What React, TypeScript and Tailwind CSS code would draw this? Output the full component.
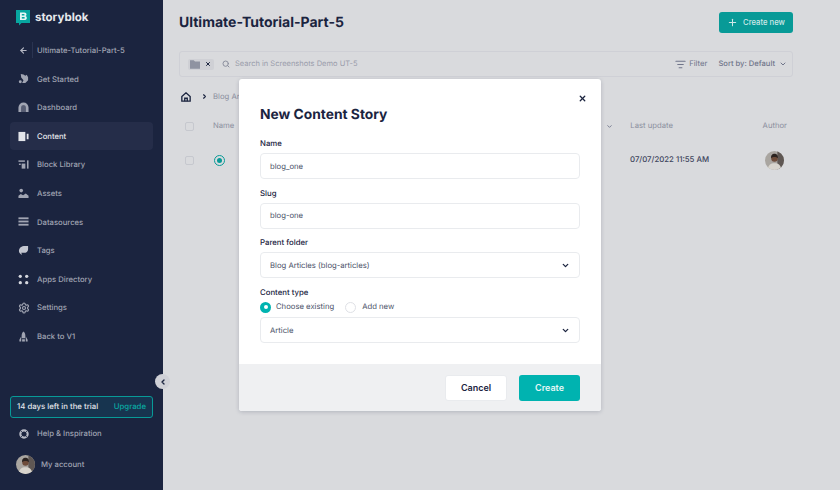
import type React from 'react';
import { ArrowLeft, ChevronDown, ChevronLeft, ChevronRight, ListFilter, Plus, Search, Settings, X } from 'lucide-react';

const Avatar: React.FC<{ className: string }> = ({ className }) => (
  <svg viewBox="0 0 20 20" className={`${className} rounded-full`}>
    <rect width="20" height="20" fill="#a9a5a0" />
    <rect x="13" width="7" height="20" fill="#5f5753" />
    <path d="M3 20c0-5 3-7 7-7s7 2 7 7z" fill="#d8d4cd" />
    <circle cx="10" cy="8" r="3.4" fill="#6e4c3a" />
    <path d="M6.4 7.5C6.2 4 8 3 10 3s3.8 1 3.6 4.5C12 5.8 8 5.8 6.4 7.5z" fill="#2b2320" />
  </svg>
);

const iconClass = 'h-[11px] w-[11px] fill-[#a1a5b3]';

const navItems: { label: string; icon: React.ReactNode; active?: boolean }[] = [
  {
    label: 'Get Started',
    icon: (
      <svg viewBox="0 0 12 12" className={iconClass}>
        <path d="M3 1l3 .5L8 3l1.5-1L11 4.5V8L8 11H4.5L6 8 3.5 5z" />
        <circle cx="2.5" cy="9.5" r="1.6" />
      </svg>
    ),
  },
  {
    label: 'Dashboard',
    icon: (
      <svg viewBox="0 0 12 12" className={iconClass}>
        <path d="M0.5 11V6a5.5 5.5 0 0 1 11 0v5H8.5V6a2.5 2.5 0 0 0-5 0v5z" />
        <path d="M3.5 11V6a2.5 2.5 0 0 1 5 0v5z" opacity="0.45" />
      </svg>
    ),
  },
  {
    label: 'Content',
    active: true,
    icon: (
      <svg viewBox="0 0 12 12" className="h-[11px] w-[11px] fill-[#e3e5ea]">
        <rect x="0.5" y="1" width="7.5" height="10" />
        <rect x="9.5" y="3" width="2" height="6" />
      </svg>
    ),
  },
  {
    label: 'Block Library',
    icon: (
      <svg viewBox="0 0 12 12" className={iconClass}>
        <rect x="0.5" y="1.5" width="7" height="1.6" />
        <rect x="4" y="5" width="4" height="5.5" />
        <rect x="1" y="5" width="2" height="1.5" />
        <rect x="9.8" y="1.5" width="1.7" height="9" />
      </svg>
    ),
  },
  {
    label: 'Assets',
    icon: (
      <svg viewBox="0 0 12 12" className={iconClass}>
        <circle cx="3.5" cy="2.8" r="2" />
        <path d="M0.5 11V8.5L3 6.5 5.5 8 8.5 6l3 2.5V11z" />
      </svg>
    ),
  },
  {
    label: 'Datasources',
    icon: (
      <svg viewBox="0 0 12 12" className={iconClass}>
        <rect x="0.5" y="1.5" width="11" height="2" />
        <rect x="0.5" y="5" width="11" height="2" />
        <rect x="0.5" y="8.5" width="11" height="2" />
      </svg>
    ),
  },
  {
    label: 'Tags',
    icon: (
      <svg viewBox="0 0 12 12" className="h-[11px] w-[11px] fill-[#c3c6d0]">
        <path d="M1 6.5C1 3 4 1 7.5 1H11v3.5C11 7 9 8.5 6.5 8.5H3.5L4.5 10.5C2.5 10 1 8.5 1 6.5z" />
      </svg>
    ),
  },
  {
    label: 'Apps Directory',
    icon: (
      <svg viewBox="0 0 12 12" className="h-[11px] w-[11px] fill-[#d5d7de]">
        <circle cx="2.5" cy="2.5" r="1.8" />
        <circle cx="9.5" cy="2.5" r="1.8" />
        <circle cx="2.5" cy="9.5" r="1.8" />
        <circle cx="9.5" cy="9.5" r="1.8" />
      </svg>
    ),
  },
  {
    label: 'Settings',
    icon: <Settings className="h-3 w-3 text-[#a1a5b3]" strokeWidth={2.4} />,
  },
  {
    label: 'Back to V1',
    icon: (
      <svg viewBox="0 0 12 12" className={iconClass}>
        <path d="M6 0.5c1.3 1 2 2.5 2 4.5v3H4V5c0-2 .7-3.5 2-4.5z" />
        <path d="M3.5 6L1.5 9.5v2h2zM8.5 6l2 3.5v2h-2z" />
        <rect x="4.5" y="9" width="3" height="2.5" />
      </svg>
    ),
  },
];

const Sidebar: React.FC = () => (
  <aside className="flex h-full w-[163px] shrink-0 flex-col bg-[#1b243f] px-[10px]">
    <div className="flex h-[36px] items-center gap-[5px] pl-[6px]">
      <svg viewBox="0 0 14 16" className="h-[16px] w-[14px]">
        <path d="M0 0h14v13H5.5L3 15.5V13H0z" fill="#08a6a0" />
        <path d="M4 2.5h4.2c1.5 0 2.3.8 2.3 2 0 .8-.4 1.3-1 1.6.8.2 1.3.9 1.3 1.8 0 1.4-1 2.1-2.5 2.1H4z" fill="#e5f6f5" />
        <rect x="5.8" y="4" width="2.6" height="1.5" fill="#08a6a0" />
        <rect x="5.8" y="7" width="2.8" height="1.6" fill="#08a6a0" />
      </svg>
      <span className="text-[11.5px] font-bold text-[#e6e8ec]">storyblok</span>
    </div>
    <div className="flex h-[28.6px] items-center">
      <ArrowLeft className="ml-[9px] h-[9px] w-[9px] text-[#b5b8c4]" strokeWidth={3} />
      <div className="ml-[4px] mr-[4px] h-[16px] w-px bg-[#2a3451]" />
      <span className="text-[7.7px] font-medium text-[#a1a5b3]">Ultimate-Tutorial-Part-5</span>
    </div>
    <nav className="flex flex-col">
      {navItems.map((item) => (
        <div
          key={item.label}
          className={`flex h-[28.6px] items-center rounded-[4px] pl-[8px] ${item.active ? 'bg-[#252d49]' : ''}`}
        >
          <span className="flex w-[19px] items-center">{item.icon}</span>
          <span className={`pt-[1px] text-[7.7px] font-medium ${item.active ? 'text-[#e8eaee]' : 'text-[#a1a5b3]'}`}>
            {item.label}
          </span>
        </div>
      ))}
    </nav>
    <div className="mt-auto mb-[11px]">
      <div className="flex h-[22px] items-center justify-between rounded-[3px] border border-[#089a97] bg-[#17344f] pl-[6px] pr-[6px]">
        <span className="text-[7.8px] font-medium text-[#e3e5ea]">14 days left in the trial</span>
        <span className="text-[7.8px] font-medium text-[#0aa8a2]">Upgrade</span>
      </div>
      <div className="flex h-[31px] items-center pl-[9px]">
        <span className="flex w-[18px] items-center">
          <svg viewBox="0 0 12 12" className="h-[10px] w-[10px]">
            <circle cx="6" cy="6" r="4.4" fill="none" stroke="#b5b8c4" strokeWidth="2.6" />
            <path d="M2.5 2.5l2 2M9.5 2.5l-2 2M2.5 9.5l2-2M9.5 9.5l-2-2" stroke="#1b243f" strokeWidth="1" />
          </svg>
        </span>
        <span className="text-[7.7px] font-medium text-[#a1a5b3]">Help &amp; Inspiration</span>
      </div>
      <div className="flex h-[30px] items-center pl-[6px]">
        <Avatar className="mr-[6px] h-[19px] w-[19px]" />
        <span className="pt-[1px] text-[7.7px] font-medium text-[#a1a5b3]">My account</span>
      </div>
    </div>
  </aside>
);

const InputBox: React.FC<{ value: string; select?: boolean; className?: string }> = ({ value, select, className }) => (
  <div className={`flex h-[26px] items-center justify-between rounded-[4px] border border-[#e9ebee] bg-white pl-[9px] pr-[9px] ${className ?? ''}`}>
    <span className="pt-[1px] text-[7.7px] text-[#4b5268]">{value}</span>
    {select && <ChevronDown className="h-[9px] w-[9px] text-[#1b243f]" strokeWidth={3.5} />}
  </div>
);

const Field: React.FC<{ label: string; value: string; select?: boolean }> = ({ label, value, select }) => (
  <div>
    <div className="text-[7.8px] font-medium leading-[12px] text-[#1b243f]">{label}</div>
    <InputBox value={value} select={select} className="mt-[4px]" />
  </div>
);

const Modal: React.FC = () => (
  <div className="absolute left-[239px] top-[79px] flex h-[332px] w-[362px] flex-col overflow-hidden rounded-[3px] bg-white shadow-[0_1px_4px_rgba(27,36,63,0.2)]">
    <X className="absolute right-[14px] top-[15px] h-[9px] w-[9px] text-[#1b243f]" strokeWidth={3.5} />
    <div className="flex-1 px-[21px] pt-[25px]">
      <h2 className="text-[13.8px] font-bold leading-[22px] text-[#1b243f]">New Content Story</h2>
      <div className="mt-[11px] flex flex-col gap-[7.5px]">
        <Field label="Name" value="blog_one" />
        <Field label="Slug" value="blog-one" />
        <Field label="Parent folder" value="Blog Articles (blog-articles)" select />
        <div>
          <div className="text-[7.8px] font-medium leading-[12px] text-[#1b243f]">Content type</div>
          <div className="mt-[3px] flex h-[13px] items-center">
            <span className="flex h-[11px] w-[11px] items-center justify-center rounded-full bg-[#00b3b0]">
              <span className="h-[4px] w-[4px] rounded-full bg-white" />
            </span>
            <span className="ml-[5px] text-[7.7px] text-[#4b5268]">Choose existing</span>
            <span className="ml-[11px] h-[11px] w-[11px] rounded-full border border-[#dfe1e6] bg-white" />
            <span className="ml-[6px] text-[7.7px] text-[#4b5268]">Add new</span>
          </div>
          <InputBox value="Article" select className="mt-[3.5px]" />
        </div>
      </div>
    </div>
    <div className="flex h-[47px] items-center justify-end gap-[12px] bg-[#eff0f2] px-[21px]">
      <button className="h-[26px] w-[62px] rounded-[3px] border border-[#e9ebee] bg-white text-[9px] font-semibold text-[#1b243f]">
        Cancel
      </button>
      <button className="h-[26px] w-[61px] rounded-[3px] bg-[#00b3b0] text-[9px] font-semibold text-[#e5f7f6]">
        Create
      </button>
    </div>
  </div>
);

const Main: React.FC = () => (
  <main className="flex h-full flex-1 flex-col bg-[#d9dadd] pl-[16px] pr-[47px]">
    <div className="flex h-[45px] items-center justify-between">
      <h1 className="text-[14px] font-bold text-[#1b243f]">Ultimate-Tutorial-Part-5</h1>
      <button className="flex h-[21px] w-[74px] items-center justify-center gap-[5px] rounded-[3px] bg-[#089a97] text-[7.7px] font-medium text-[#cfe8e8]">
        <Plus className="h-[11px] w-[11px]" strokeWidth={2.2} />
        Create new
      </button>
    </div>
    <div className="mt-[6px] flex h-[26px] items-center rounded-[3px] border border-[#cfd0d6] pl-[8px] pr-[5px]">
      <div className="flex h-[11px] w-[26px] items-center gap-[5px] rounded-[2px] bg-[#cfd0d5] px-[2px]">
        <svg viewBox="0 0 12 10" className="h-[9px] w-[10px] fill-[#8f93a1]">
          <path d="M0 0h4.5L6 1.5h6V10H0z" />
        </svg>
        <X className="h-[6px] w-[6px] text-[#1b243f]" strokeWidth={4} />
      </div>
      <Search className="ml-[8px] h-[8px] w-[8px] text-[#8b8f9e]" strokeWidth={3} />
      <span className="ml-[5px] text-[7.5px] text-[#9a9dab]">Search in Screenshots Demo UT-5</span>
      <ListFilter className="ml-auto h-[11px] w-[11px] text-[#70758a]" strokeWidth={2.5} />
      <span className="ml-[3px] text-[7.7px] text-[#70758a]">Filter</span>
      <span className="ml-[11px] text-[7.6px] font-medium text-[#70758a]">Sort by: Default</span>
      <ChevronDown className="ml-[4px] h-[8px] w-[8px] text-[#70758a]" strokeWidth={3} />
    </div>
    <div className="mt-[12px] flex h-[15px] items-center pl-[2px]">
      <svg viewBox="0 0 12 12" className="h-[10px] w-[10px] fill-none stroke-[#1b243f] stroke-[1.6]">
        <path d="M1 5.5L6 1l5 4.5V11H1z" />
        <path d="M4.5 11V7.5h3V11" />
      </svg>
      <ChevronRight className="ml-[10px] h-[7px] w-[7px] text-[#1b243f]" strokeWidth={4} />
      <span className="ml-[5px] text-[7.7px] text-[#8b8f9e]">Blog Articles</span>
    </div>
    <div className="mt-[12px] flex h-[20px] items-center text-[7.7px] text-[#8b8f9e]">
      <span className="ml-[6px] h-[9px] w-[9px] rounded-[2px] border border-[#c6c8ce]" />
      <span className="ml-[19px]">Name</span>
      <ChevronDown className="ml-[372px] h-[7px] w-[7px] text-[#70758a]" strokeWidth={3} />
      <span className="ml-[17px]">Last update</span>
      <span className="ml-auto mr-[6px]">Author</span>
    </div>
    <div className="mt-[14px] flex h-[20px] items-center">
      <span className="ml-[6px] h-[9px] w-[9px] rounded-[2px] border border-[#c6c8ce]" />
      <span className="ml-[20px] flex h-[11px] w-[11px] items-center justify-center rounded-full border border-[#089a97]">
        <span className="h-[5px] w-[5px] rounded-full bg-[#089a97]" />
      </span>
      <span className="ml-[405px] text-[7.8px] font-medium text-[#3d445c]">07/07/2022 11:55 AM</span>
      <Avatar className="ml-auto mr-[9px] h-[19px] w-[19px]" />
    </div>
  </main>
);

export default function App() {
  return (
    <div className="relative flex h-[490px] w-[840px] overflow-hidden font-['Inter',sans-serif] [text-rendering:geometricPrecision]">
      <Sidebar />
      <Main />
      <div className="absolute left-[155px] top-[374px] flex h-[15px] w-[15px] items-center justify-center rounded-full bg-[#cfd0d6]">
        <ChevronLeft className="h-[8px] w-[8px] text-[#1b243f]" strokeWidth={4} />
      </div>
      <Modal />
    </div>
  );
}
